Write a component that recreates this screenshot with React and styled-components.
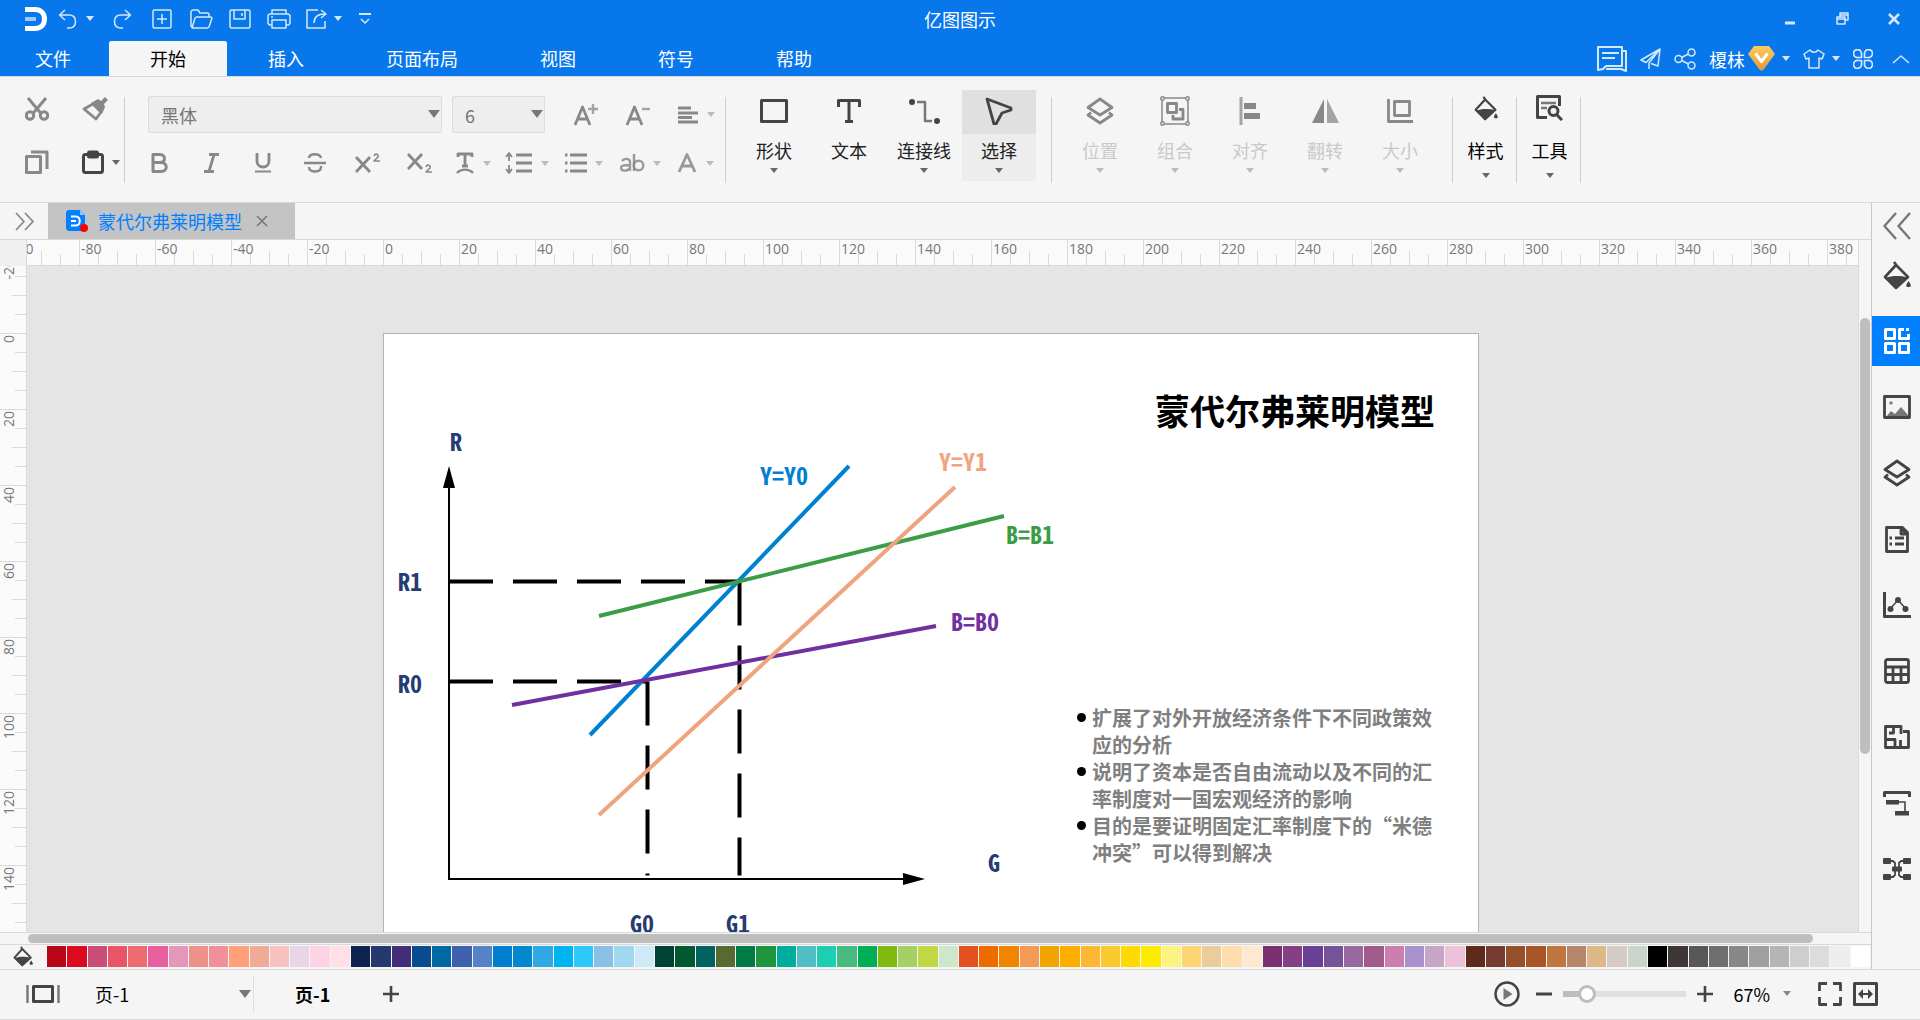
import { useState } from "react";
import styled, { createGlobalStyle, ThemeProvider } from "styled-components";

const theme = {
  colors: {
    brand: "#0877ec",
    active: "#0080ff",
    panel: "#f5f5f5",
    line: "#d9d9d9",
    tick: "#dadada",
    dark: "#444444",
    muted: "#888888",
    faded: "#c9c9c9",
    canvas: "#e5e5e5",
    thumb: "#bebebe",
    navy: "#263c73",
  },
  fonts: {
    ui: '"Noto Sans CJK SC", sans-serif',
    ruler: '"Open Sans", "Noto Sans", sans-serif',
    chart: '"Noto Sans Mono CJK SC", "Noto Sans CJK SC", sans-serif',
  },
};

/* ---------- icons ---------- */

const Svg = styled.svg`
  display: block;
  flex: none;
  fill: none;
  stroke: currentColor;
  stroke-width: ${({ $stroke }) => $stroke || 2};
  stroke-linejoin: round;
`;

function Icon({ w = 24, h = 24, stroke, children }) {
  return (
    <Svg width={w} height={h} viewBox={`0 0 ${w} ${h}`} $stroke={stroke} aria-hidden="true">
      {children}
    </Svg>
  );
}

const Caret = ({ large }) =>
  large ? (
    <Icon w={12} h={8}>
      <path d="M0 0h12l-6 8z" fill="currentColor" stroke="none" />
    </Icon>
  ) : (
    <Icon w={8} h={5}>
      <path d="M0 0h8L4 5z" fill="currentColor" stroke="none" />
    </Icon>
  );

const LogoIcon = () => (
  <Icon stroke={5}>
    <path d="M1 2.500h10c6 0 9.500 4 9.500 9.500s-3.500 9.500-9.500 9.500H1" />
    <path d="M1 12h11" stroke="#9cc9f7" strokeWidth="4" />
  </Icon>
);

const UndoIcon = () => (
  <Icon w={19} h={20} stroke={1.5}>
    <path d="M7 1 1.500 6 7 11M2 6h9c4 0 6.500 2.500 6.500 6.500S15 19 11 19H9" />
  </Icon>
);

const RedoIcon = () => (
  <Icon w={19} h={20} stroke={1.5}>
    <path d="m12 1 5.500 5-5.500 5M17 6H8c-4 0-6.500 2.500-6.500 6.500S4 19 8 19h2" />
  </Icon>
);

const NewIcon = () => (
  <Icon w={20} h={20} stroke={1.5}>
    <rect x="1" y="1" width="18" height="18" rx="1.500" />
    <path d="M10 5v10M5 10h10" />
  </Icon>
);

const OpenIcon = () => (
  <Icon w={24} h={20} stroke={1.5}>
    <path d="M2 18V2.500L3.500 1H9l2 3h8l1 1v3M3 19 6 9l1.500-1H22l1 1-3 9-1.500 1z" />
  </Icon>
);

const SaveIcon = () => (
  <Icon w={22} h={20} stroke={1.5}>
    <rect x="1" y="1" width="20" height="18" rx="1.500" />
    <path d="M5 1v9h11V1M13 4v3" />
  </Icon>
);

const PrintIcon = () => (
  <Icon w={24} h={20} stroke={1.5}>
    <path d="M5 5V1h14v4M5 16H2.500L1 14.500v-8L2.500 5h19L23 6.500v8L21.500 16H19" />
    <path d="M5 11h14v8H5zM4 8h2" />
  </Icon>
);

const ExportIcon = () => (
  <Icon w={21} h={20} stroke={1.5}>
    <path d="M12 1H1v18h18v-7" />
    <path d="M8 14c0-6 4-9 11-9m-4-4 5 4-5 4" />
  </Icon>
);

const CustomizeIcon = () => (
  <Icon w={12} h={12} stroke={2}>
    <path d="M0 1h12" />
    <path d="m2 6 4 4 4-4" strokeWidth="1.500" />
  </Icon>
);

const MinimizeIcon = () => (
  <Icon w={10} h={14} stroke={3}>
    <path d="M0 11h10" />
  </Icon>
);

const RestoreIcon = () => (
  <Icon w={13} h={13} stroke={1.5}>
    <path d="M4 5V1h8v7H9M4 3h8M1 5h8v7H1zM1 7h8" />
  </Icon>
);

const CloseIcon = () => (
  <Icon w={12} h={12} stroke={2.5}>
    <path d="m1 1 10 10M11 1 1 11" />
  </Icon>
);

const ChatIcon = () => (
  <Icon w={30} h={26} stroke={2}>
    <path d="M1 1h24v19H9l-3 3-5 1zM5 7h17M5 12h13" />
    <path d="M26 5h3v20l-5-2H9" />
  </Icon>
);

const SendIcon = () => (
  <Icon w={21} h={22} stroke={1.5}>
    <path d="M20 1 1 12l5 2.500L20 1l-2 17-7-2.500M20 1 9 15v6" />
  </Icon>
);

const ShareIcon = () => (
  <Icon w={22} h={22} stroke={1.5}>
    <circle cx="4.500" cy="11" r="3.500" />
    <circle cx="17.500" cy="4.500" r="3.500" />
    <circle cx="17.500" cy="17.500" r="3.500" />
    <path d="m7.500 9.500 7-3.500M7.500 12.500l7 3.500" />
  </Icon>
);

const VipIcon = () => (
  <Icon w={27} h={25}>
    <defs>
      <linearGradient id="vip" x1="0" y1="0" x2="0" y2="1">
        <stop offset="0" stopColor="#ffcb5c" />
        <stop offset="1" stopColor="#e09c3a" />
      </linearGradient>
    </defs>
    <path d="M6 0h15l6 8-11 15c-2 2-3 2-5 0L0 8z" fill="url(#vip)" stroke="none" />
    <path d="m7.500 7.500 6 8 6-8" stroke="#fff" strokeWidth="3" />
  </Icon>
);

const ShirtIcon = () => (
  <Icon w={22} h={20} stroke={1.5}>
    <path d="M7 1 1 5l2 5 3-1v10h10V9l3 1 2-5-6-4c-2 3-6 3-8 0z" />
  </Icon>
);

const CloverIcon = () => (
  <Icon w={20} h={20} stroke={1.7}>
    <path d="M8.500 8.500H5A4 4 0 1 1 8.500 5zM11.500 8.500V5a4 4 0 1 1 3.500 3.500zM8.500 11.500V15A4 4 0 1 1 5 11.500zM11.500 11.500H15a4 4 0 1 1-3.500 3.500z" />
  </Icon>
);

const ChevronUpIcon = () => (
  <Icon w={18} h={10} stroke={1.5}>
    <path d="m1 9 8-7 8 7" />
  </Icon>
);

const CutIcon = () => (
  <Icon stroke={3}>
    <path d="M3 1 16.500 17M21 1 7.500 17" />
    <circle cx="5" cy="18.500" r="3.700" />
    <circle cx="19" cy="18.500" r="3.700" />
  </Icon>
);

const BrushIcon = () => (
  <Icon w={26} stroke={2.8}>
    <path d="m2 12 9-5 8 8-5 7z" />
    <path d="m9 6 7-4 3 2 4-4 3 3-4 4 1 3-3 7z" fill="currentColor" stroke="none" />
  </Icon>
);

const CopyIcon = () => (
  <Icon stroke={3}>
    <path d="M1.500 6.500h14v16h-14z" />
    <path d="M6 2h16v17" />
  </Icon>
);

const PasteIcon = () => (
  <Icon w={22} stroke={3}>
    <rect x="1.500" y="4.500" width="19" height="18" rx="2" />
    <rect x="6.500" y="2" width="9" height="5" rx="1" />
  </Icon>
);

const FontUpIcon = () => (
  <Icon w={25} stroke={2.8}>
    <path d="M2 22 9.500 4 17 22M4.500 16h10" />
    <path d="M20 1v10M15 6h10" strokeWidth="2.400" opacity="0.75" />
  </Icon>
);

const FontDownIcon = () => (
  <Icon w={25} stroke={2.8}>
    <path d="M2 22 9.500 4 17 22M4.500 16h10" />
    <path d="M17 6h8" strokeWidth="2.400" opacity="0.75" />
  </Icon>
);

const AlignIcon = () => (
  <Icon w={22} h={18} stroke={2.8}>
    <path d="M1 2h13M1 7h20M1 11.500h14M1 16h20" />
  </Icon>
);

const BoldIcon = () => (
  <Icon w={17} h={20} stroke={3}>
    <path d="M2 1.500h7c6 0 6 8 0 8H2zM2 9.500h8c7 0 7 9 0 9H2z" />
  </Icon>
);

const ItalicIcon = () => (
  <Icon w={17} h={20} stroke={2.8}>
    <path d="M6 1.500h10M1 18.500h10M11 1.500 6 18.500" />
  </Icon>
);

const UnderlineIcon = () => (
  <Icon w={17} h={20} stroke={2.8}>
    <path d="M2 0v8c0 8 12 8 12 0V0" />
    <path d="M0 18.500h16" strokeWidth="2" />
  </Icon>
);

const StrikeIcon = () => (
  <Icon w={22} h={20} stroke={2.5}>
    <path d="M0 10h22M17 5c-1-5-12-5-12 0M5 14c0 6 12 6 12 0v-1" />
  </Icon>
);

const SuperIcon = () => (
  <Icon w={25} h={20} stroke={2.8}>
    <path d="m1 4 14 15M15 4 1 19" />
    <path d="M19 3c1-3 5-2 4 1l-4 4h6" strokeWidth="1.600" />
  </Icon>
);

const SubIcon = () => (
  <Icon w={25} h={20} stroke={2.8}>
    <path d="m1 1 14 15M15 1 1 16" />
    <path d="M19 14c1-3 5-2 4 1l-4 4h6" strokeWidth="1.600" />
  </Icon>
);

const TextArcIcon = () => (
  <Icon w={19} h={22} stroke={2.8}>
    <path d="M2 5V2h14v3M9 2v12M6 14h6" />
    <path d="M1 21c4-4.500 12-4.500 16 0" strokeWidth="2.400" />
  </Icon>
);

const LineHeightIcon = () => (
  <Icon w={28} h={22} stroke={2.8}>
    <path d="M11 3h16M11 11h16M11 19h16" />
    <path d="M4 2v7M1 5l3-4 3 4M4 13v7M1 17l3 4 3-4" strokeWidth="1.800" />
  </Icon>
);

const ListIcon = () => (
  <Icon w={22} h={20} stroke={2.8}>
    <path d="M5 2h17M5 10h17M5 18h17M0 2h2.500M0 10h2.500M0 18h2.500" />
  </Icon>
);

const AbIcon = () => (
  <Icon w={25} h={20} stroke={2.4}>
    <path d="M2 8c2-3 8-3 8 1v9M10 12c-5 0-9 0-9 3s6 4 9 0M14 1v17" opacity="0.85" />
    <circle cx="18.500" cy="12.500" r="4.800" opacity="0.85" />
  </Icon>
);

const FontColorIcon = () => (
  <Icon w={21} h={20} stroke={2.8}>
    <path d="M2 19 10 1.500 18 19M5 13h10" opacity="0.85" />
  </Icon>
);

const RectIcon = () => (
  <Icon w={28} h={26} stroke={3}>
    <path d="M1.500 2.500h25v21h-25z" />
  </Icon>
);

const TextIcon = () => (
  <Icon w={24} h={26} stroke={3}>
    <path d="M1.500 9V2.500h21V9M12 3v20M8 23.500h8" />
  </Icon>
);

const ConnectorIcon = () => (
  <Icon w={31} h={26} stroke={2.5}>
    <path d="M8 4h8v19h7" stroke="#777" />
    <circle cx="3" cy="4" r="3" fill="currentColor" stroke="none" />
    <circle cx="28" cy="23" r="3" fill="currentColor" stroke="none" />
  </Icon>
);

const PointerIcon = () => (
  <Icon w={28} h={28} stroke={2.8}>
    <path d="m2 2 24 9v2l-9 3-6 11H9z" />
  </Icon>
);

const LayersIcon = () => (
  <Icon w={28} h={28} stroke={2.8}>
    <path d="m14 2 12 8.500L14 18 2 10.500zM5 15.500 2 18l12 8 12-8-3-2.500" />
  </Icon>
);

const GroupIcon = () => (
  <Icon w={30} h={30} stroke={1.5}>
    <path d="M2 2h26v26H2z" />
    <g fill="#f5f5f5">
      <circle cx="2.500" cy="2.500" r="1.700" />
      <circle cx="27.500" cy="2.500" r="1.700" />
      <circle cx="2.500" cy="27.500" r="1.700" />
      <circle cx="27.500" cy="27.500" r="1.700" />
    </g>
    <path d="M7.500 7.500h9v9h-9zM19 13.500h4V23H13v-4" strokeWidth="2.800" />
  </Icon>
);

const AlignLeftIcon = () => (
  <Icon w={22} h={28}>
    <path d="M2 0v28" strokeWidth="3" opacity="0.75" />
    <path d="M5 6h12v6H5zM5 16h16v6H5z" fill="currentColor" stroke="none" />
  </Icon>
);

const FlipIcon = () => (
  <Icon w={27} h={24}>
    <path d="M12 0v24H0z" fill="currentColor" stroke="none" />
    <path d="M15 0v24h12z" fill="currentColor" stroke="none" opacity="0.75" />
  </Icon>
);

const SizeIcon = () => (
  <Icon w={26} h={24} stroke={2.8}>
    <path d="M1.500 0v22.500H26M7.500 2.500h15v14h-15z" />
  </Icon>
);

const BucketIcon = ({ w = 28, h = 29 }) => (
  <Svg width={w} height={h} viewBox="0 0 28 29" $stroke={2.6} aria-hidden="true">
    <path d="m11 1 3 4M13 4 2 16l11 11 12-11z" />
    <path d="M3 17c6-3 15-2 21-1L13 28z" fill="currentColor" stroke="none" />
    <path d="M25.500 20c3 4 3 6 0 6s-3-2 0-6z" fill="currentColor" stroke="none" />
  </Svg>
);

const ToolsIcon = () => (
  <Icon w={27} h={26} stroke={3}>
    <path d="M11 22.500H1.500v-21h22V11" />
    <path d="M5 8h15M5 13h6" stroke="#777" strokeWidth="2.500" />
    <circle cx="17.500" cy="16" r="4.500" />
    <path d="m21 20 5 5" />
  </Icon>
);

const DoubleRightIcon = () => (
  <Icon w={19} h={19} stroke={1.8}>
    <path d="m1 1 8 8.500L1 18M10 1l8 8.500-8 8.500" />
  </Icon>
);

const DoubleLeftIcon = () => (
  <Icon w={28} h={28} stroke={2.4}>
    <path d="M13 1 1.500 14 13 27M27 1 15.500 14 27 27" />
  </Icon>
);

const DocIcon = () => (
  <Icon w={22} h={24}>
    <path d="M2 1h12l5 5v15l-1 1H2l-2-2V3z" fill="#0080ff" stroke="none" />
    <path d="M14 1v5h5z" fill="#8ec6ff" stroke="none" />
    <path d="M5 7.500h5c5 0 5 9 0 9H5M5 12h5" stroke="#fff" strokeWidth="2" />
    <circle cx="18" cy="19" r="4" fill="#f00" stroke="none" />
  </Icon>
);

const SmallCloseIcon = () => (
  <Icon w={12} h={12} stroke={1.6}>
    <path d="m1 1 10 10M11 1 1 11" />
  </Icon>
);

const SymbolsIcon = () => (
  <Icon w={26} h={26} stroke={3}>
    <path d="M1.500 1.500h9v9h-9zM1.500 15.500h9v9h-9zM15.500 15.500h9v9h-9zM20 1.500h-4.500v9h9V6M23.500 0v3" />
  </Icon>
);

const ImageIcon = () => (
  <Icon w={28} h={24} stroke={2.8}>
    <path d="m3 22 5-6 4 3 6-7 7 8v2z" fill="#777" stroke="none" />
    <path d="M6.500 8h3" stroke="#777" />
    <path d="M1.500 1.500h25v21h-25z" />
  </Icon>
);

const OutlineDocIcon = () => (
  <Icon w={24} h={27} stroke={2.8}>
    <path d="M1.500 1.500h16l5 5v19h-21z" />
    <path d="M16 2v6h6zM4.500 12H7M10 12h9M4.500 18H7M10 18h9" />
  </Icon>
);

const ChartIcon = () => (
  <Icon w={28} h={26}>
    <path d="M1.500 0v24.500H28" strokeWidth="3" />
    <path d="m7 17 8-9 8 9" strokeWidth="1.500" />
    <g fill="currentColor" stroke="none">
      <circle cx="7.500" cy="17" r="3" />
      <circle cx="15" cy="8" r="3" />
      <circle cx="22.500" cy="17" r="3" />
    </g>
  </Icon>
);

const TableIcon = () => (
  <Icon w={26} h={26} stroke={2.8}>
    <rect x="1.500" y="1.500" width="23" height="23" rx="2" />
    <path d="M2 9h22M2 16.500h22M9 9v15M17 9v15" />
  </Icon>
);

const FloorPlanIcon = () => (
  <Icon w={26} h={26} stroke={2.8}>
    <path d="M17 10V2.500H1.500v21h23V7.500H19M9.500 2.500V9H5M1.500 15.500H11V23M16.500 16v7" />
  </Icon>
);

const RollerIcon = () => (
  <Icon w={28} h={26}>
    <path d="M1.500 7V2.500h25V7" strokeWidth="3" />
    <path d="M3 10h13v4.500H3zM12 21h14v4.500H12z" fill="currentColor" stroke="none" />
    <path d="M15 12h7v9" strokeWidth="1.600" />
  </Icon>
);

const MindMapIcon = () => (
  <Icon w={28} h={24}>
    <g fill="currentColor" stroke="none">
      <rect y="1" width="8" height="6" rx="1" />
      <rect x="20" y="1" width="8" height="6" rx="1" />
      <rect y="17" width="8" height="6" rx="1" />
      <rect x="20" y="17" width="8" height="6" rx="1" />
      <rect x="9" y="9.500" width="10" height="5" rx="1" />
    </g>
    <path d="M7 4h3l2 2v12l-2 2H7M21 4h-3l-2 2v12l2 2h3" strokeWidth="1.800" />
  </Icon>
);

const PagesIcon = () => (
  <Icon w={34} h={20}>
    <path d="M1.500 1v18M32.500 1v18" stroke="#777" strokeWidth="2.400" />
    <path d="M7.500 2.500h19v15h-19z" strokeWidth="3" />
  </Icon>
);

const PlusIcon = () => (
  <Icon w={16} h={16} stroke={2.6}>
    <path d="M8 0v16M0 8h16" />
  </Icon>
);

const MinusIcon = () => (
  <Icon w={16} h={16} stroke={3}>
    <path d="M0 8h16" />
  </Icon>
);

const PlayIcon = () => (
  <Icon w={26} h={26} stroke={2.4}>
    <circle cx="13" cy="13" r="11.500" />
    <path d="M9.500 7v12l9-6z" fill="#777" stroke="none" />
  </Icon>
);

const FullscreenIcon = () => (
  <Icon w={24} h={24} stroke={2.8}>
    <path d="M9 1.500H1.500V9M15 1.500h7.500V9M9 22.500H1.500V15M15 22.500h7.500V15" />
  </Icon>
);

const FitIcon = () => (
  <Icon w={25} h={24} stroke={3}>
    <path d="M1.500 1.500h22v21h-22z" />
    <path d="M8 12h9" strokeWidth="2" />
    <path d="m10 7-5 5 5 5zM15 7l5 5-5 5z" fill="currentColor" stroke="none" />
  </Icon>
);

/* ---------- data ---------- */

const menuTabs = ["文件", "开始", "插入", "页面布局", "视图", "符号", "帮助"];

const quickActions = [
  { label: "重做", icon: <RedoIcon /> },
  { label: "新建", icon: <NewIcon /> },
  { label: "打开", icon: <OpenIcon /> },
  { label: "保存", icon: <SaveIcon /> },
  { label: "打印", icon: <PrintIcon /> },
];

const formatTools = [
  { label: "加粗", icon: <BoldIcon />, width: 52 },
  { label: "斜体", icon: <ItalicIcon />, width: 52 },
  { label: "下划线", icon: <UnderlineIcon />, width: 52 },
  { label: "删除线", icon: <StrikeIcon />, width: 52 },
  { label: "上标", icon: <SuperIcon />, width: 52 },
  { label: "下标", icon: <SubIcon />, width: 52 },
  { label: "文字效果", icon: <TextArcIcon />, width: 56, caret: true },
  { label: "行距", icon: <LineHeightIcon />, width: 52, caret: true },
  { label: "项目符号", icon: <ListIcon />, width: 62, caret: true },
  { label: "大小写", icon: <AbIcon />, width: 50, caret: true },
  { label: "字体颜色", icon: <FontColorIcon />, width: 60, caret: true },
];

const insertTools = [
  { label: "形状", icon: <RectIcon />, caret: true },
  { label: "文本", icon: <TextIcon /> },
  { label: "连接线", icon: <ConnectorIcon />, caret: true },
  { label: "选择", icon: <PointerIcon />, caret: true, selected: true },
];

const arrangeTools = [
  { label: "位置", icon: <LayersIcon /> },
  { label: "组合", icon: <GroupIcon /> },
  { label: "对齐", icon: <AlignLeftIcon /> },
  { label: "翻转", icon: <FlipIcon /> },
  { label: "大小", icon: <SizeIcon /> },
];

const sideTools = [
  { label: "填充", icon: <BucketIcon /> },
  { label: "符号库", icon: <SymbolsIcon />, active: true },
  { label: "图片", icon: <ImageIcon /> },
  { label: "图层", icon: <LayersIcon /> },
  { label: "大纲", icon: <OutlineDocIcon /> },
  { label: "图表", icon: <ChartIcon /> },
  { label: "表格", icon: <TableIcon /> },
  { label: "平面图", icon: <FloorPlanIcon /> },
  { label: "主题", icon: <RollerIcon /> },
  { label: "思维导图", icon: <MindMapIcon /> },
];

const palette = (
  "b70718 db0a1e c94f77 e85565 ed6c70 e75f9e e497b8 ef9089 f19099 ffa079 f0ab96 f6c1be ead4e8 ffd2e4 fee0e6 " +
  "0f2350 243a6f 422d78 094b8f 0068a5 3f60ad 5584c6 007fd1 0089cf 2fa8e3 00b4f0 2fc8fb 8abfe8 a0d8ef ceeaf6 " +
  "004334 005931 00635f 576b30 007b46 1f963e 00ae9e 50bec3 1acfb4 47bb80 00af54 80b90f a5d064 bfd843 cee7ca " +
  "e35120 ee6b00 f28500 f59a52 f2a500 ffae00 feb733 fac92f ffda00 feec00 fdf383 fed574 ebcd9b ffdead fde9d1 " +
  "7b3072 843f85 684197 765398 9868a0 a05b8b cd7eb1 a991cd c7a5c9 ebc2da 5c2b1b 753c30 954f2a a95626 c0773f " +
  "b5866b dfb887 d4cbc5 cbd4cb 000000 3e3736 585656 6f6f6f 878787 9ea0a0 b4b6b6 cdcece dcdcdc ededed ffffff"
).split(" ");

const points = [
  "扩展了对外开放经济条件下不同政策效应的分析",
  "说明了资本是否自由流动以及不同的汇率制度对一国宏观经济的影响",
  "目的是要证明固定汇率制度下的“米德冲突”可以得到解决",
];

const range = (from, count) => Array.from({ length: count }, (_, i) => from + i * 20);

/* ---------- diagram ---------- */

function Diagram() {
  return (
    <ChartSvg width="700" height="640" viewBox="0 0 700 640" role="img" aria-label="蒙代尔弗莱明模型">
      <g stroke="#000" strokeWidth="2">
        <path d="M65 150v395h458" />
        <path d="m65 132 6 22H59zM541 545l-22-6v12z" fill="#000" stroke="none" />
      </g>
      <g stroke="#000" strokeWidth="4" strokeDasharray="44 20">
        <path d="M65 247.500h291M65 347.500h199M355.500 247.500v294M263.500 347.500v194" />
      </g>
      <g strokeWidth="4">
        <path d="M206 401 465 132" stroke="#0080d0" />
        <path d="m215 282 405-100" stroke="#3c9c47" />
        <path d="m128 371 424-79" stroke="#7030a0" />
        <path d="m215 481 356-328" stroke="#f0a47e" />
      </g>
      <g>
        <text x="66" y="117">R</text>
        <text x="14" y="257">R1</text>
        <text x="14" y="359">R0</text>
        <text x="604" y="538">G</text>
        <text x="246" y="599">G0</text>
        <text x="342" y="599">G1</text>
        <CurveLabel x="376" y="151" $color="#0080d0">Y=Y0</CurveLabel>
        <CurveLabel x="555" y="137" $color="#f0a47e">Y=Y1</CurveLabel>
        <CurveLabel x="622" y="210" $color="#3c9c47">B=B1</CurveLabel>
        <CurveLabel x="567" y="297" $color="#7030a0">B=B0</CurveLabel>
      </g>
    </ChartSvg>
  );
}

/* ---------- page ---------- */

export default function App() {
  const [zoom, setZoom] = useState(14);

  return (
    <ThemeProvider theme={theme}>
      <GlobalStyle />
      <Window>
        <Header>
          <TitleBar>
            <QuickAccess>
              <LogoIcon />
              <QuickButton $width={55} $gap={9} aria-label="撤销">
                <UndoIcon />
                <Caret />
              </QuickButton>
              {quickActions.map(({ label, icon }) => (
                <QuickButton key={label} $width={39} aria-label={label}>
                  {icon}
                </QuickButton>
              ))}
              <QuickButton $width={51} $gap={7} aria-label="导出">
                <ExportIcon />
                <Caret />
              </QuickButton>
              <QuickButton $width={32} aria-label="自定义">
                <CustomizeIcon />
              </QuickButton>
            </QuickAccess>
            <AppTitle>亿图图示</AppTitle>
            <WindowButtons>
              <QuickButton $width={52} aria-label="最小化">
                <MinimizeIcon />
              </QuickButton>
              <QuickButton $width={52} aria-label="还原">
                <RestoreIcon />
              </QuickButton>
              <QuickButton $width={52} aria-label="关闭">
                <CloseIcon />
              </QuickButton>
            </WindowButtons>
          </TitleBar>
          <MenuBar>
            <nav>
              {menuTabs.map((tab) => (
                <MenuTab key={tab} $active={tab === "开始"}>
                  {tab}
                </MenuTab>
              ))}
            </nav>
            <Account>
              <HeaderButton aria-label="消息">
                <ChatIcon />
              </HeaderButton>
              <HeaderButton aria-label="发送">
                <SendIcon />
              </HeaderButton>
              <HeaderButton aria-label="分享">
                <ShareIcon />
              </HeaderButton>
              <HeaderButton>
                <UserName>
                  榎枺
                  <VipIcon />
                </UserName>
                <Caret />
              </HeaderButton>
              <HeaderButton aria-label="皮肤">
                <ShirtIcon />
                <Caret />
              </HeaderButton>
              <HeaderButton aria-label="应用">
                <CloverIcon />
              </HeaderButton>
              <HeaderButton $width={30} aria-label="收起">
                <ChevronUpIcon />
              </HeaderButton>
            </Account>
          </MenuBar>
        </Header>

        <Ribbon>
          <ClipboardGroup>
            <ToolButton aria-label="剪切">
              <CutIcon />
            </ToolButton>
            <ToolButton aria-label="格式刷">
              <BrushIcon />
            </ToolButton>
            <ToolButton aria-label="复制">
              <CopyIcon />
            </ToolButton>
            <ToolButton $dark aria-label="粘贴">
              <PasteIcon />
              <Caret />
            </ToolButton>
          </ClipboardGroup>
          <Divider />
          <FontGroup>
            <FontRow>
              <SelectBox $width={294}>
                <select aria-label="字体" defaultValue="黑体">
                  <option>黑体</option>
                </select>
                <Caret large />
              </SelectBox>
              <SelectBox $width={93}>
                <select aria-label="字号" defaultValue="6">
                  <option>6</option>
                </select>
                <Caret large />
              </SelectBox>
              <SizeButtons>
                <ToolButton aria-label="增大字号">
                  <FontUpIcon />
                </ToolButton>
                <ToolButton aria-label="减小字号">
                  <FontDownIcon />
                </ToolButton>
                <ToolButton $fadedCaret aria-label="对齐方式">
                  <AlignIcon />
                  <Caret />
                </ToolButton>
              </SizeButtons>
            </FontRow>
            <FormatRow>
              {formatTools.map(({ label, icon, width, caret }) => (
                <ToolButton key={label} $width={width} $fadedCaret={caret} aria-label={label}>
                  {icon}
                  {caret && <Caret />}
                </ToolButton>
              ))}
            </FormatRow>
          </FontGroup>
          <Divider />
          <BigGroup>
            {insertTools.map(({ label, icon, caret, selected }) => (
              <BigButton key={label} $selected={selected}>
                <BigIcon $selected={selected}>{icon}</BigIcon>
                <BigLabel>{label}</BigLabel>
                {caret && <Caret />}
              </BigButton>
            ))}
          </BigGroup>
          <Divider />
          <BigGroup>
            {arrangeTools.map(({ label, icon }) => (
              <BigButton key={label} $faded>
                <BigIcon>{icon}</BigIcon>
                <BigLabel>{label}</BigLabel>
                <Caret />
              </BigButton>
            ))}
          </BigGroup>
          <Divider />
          <PanelButton>
            <BigIcon>
              <BucketIcon w={24} h={25} />
            </BigIcon>
            <BigLabel>样式</BigLabel>
            <Caret />
          </PanelButton>
          <Divider />
          <PanelButton>
            <BigIcon>
              <ToolsIcon />
            </BigIcon>
            <BigLabel>工具</BigLabel>
            <Caret />
          </PanelButton>
          <Divider />
        </Ribbon>

        <Body>
          <Editor>
            <DocumentTabs>
              <ExpandButton aria-label="展开">
                <DoubleRightIcon />
              </ExpandButton>
              <DocumentTab>
                <DocIcon />
                <span>蒙代尔弗莱明模型</span>
                <button aria-label="关闭标签">
                  <SmallCloseIcon />
                </button>
              </DocumentTab>
            </DocumentTabs>
            <Workspace>
              <RulerCorner />
              <TopRuler>
                {range(-100, 25).map((n) => (
                  <TopMark key={n}>{n}</TopMark>
                ))}
              </TopRuler>
              <ScrollTrackV>
                <div />
              </ScrollTrackV>
              <LeftRuler>
                {range(-20, 9).map((n) => (
                  <LeftMark key={n}>
                    <span>{n}</span>
                  </LeftMark>
                ))}
              </LeftRuler>
              <Canvas>
                <Paper>
                  <Diagram />
                  <Notes>
                    <h1>蒙代尔弗莱明模型</h1>
                    <ul>
                      {points.map((point) => (
                        <li key={point}>{point}</li>
                      ))}
                    </ul>
                  </Notes>
                </Paper>
              </Canvas>
            </Workspace>
            <ScrollTrackH>
              <div />
            </ScrollTrackH>
            <PaletteBar>
              <PaletteFill aria-label="填充颜色">
                <BucketIcon w={20} h={21} />
              </PaletteFill>
              {palette.map((color) => (
                <Swatch key={color} style={{ background: `#${color}` }} aria-label={`#${color}`} />
              ))}
            </PaletteBar>
          </Editor>
          <SideBar>
            <CollapseButton aria-label="收起面板">
              <DoubleLeftIcon />
            </CollapseButton>
            {sideTools.map(({ label, icon, active }) => (
              <SideButton key={label} $active={active} aria-label={label}>
                <span>{icon}</span>
              </SideButton>
            ))}
          </SideBar>
        </Body>

        <StatusBar>
          <StatusButton aria-label="页面视图">
            <PagesIcon />
          </StatusButton>
          <PageSelect>
            <select aria-label="页面" defaultValue="页-1">
              <option>页-1</option>
            </select>
            <Caret large />
          </PageSelect>
          <PageTab>页-1</PageTab>
          <StatusButton aria-label="新建页面">
            <PlusIcon />
          </StatusButton>
          <ZoomTools>
            <PlayButton aria-label="播放">
              <PlayIcon />
            </PlayButton>
            <StatusButton aria-label="缩小">
              <MinusIcon />
            </StatusButton>
            <ZoomSlider
              type="range"
              aria-label="缩放"
              value={zoom}
              onChange={(e) => setZoom(Number(e.target.value))}
            />
            <StatusButton aria-label="放大">
              <PlusIcon />
            </StatusButton>
            <ZoomLevel>
              67%
              <Caret />
            </ZoomLevel>
            <StatusButton aria-label="全屏">
              <FullscreenIcon />
            </StatusButton>
            <StatusButton aria-label="适应宽度">
              <FitIcon />
            </StatusButton>
          </ZoomTools>
        </StatusBar>
      </Window>
    </ThemeProvider>
  );
}

/* ---------- styles ---------- */

const GlobalStyle = createGlobalStyle`
  * {
    box-sizing: border-box;
  }

  body {
    margin: 0;
    font-family: ${({ theme }) => theme.fonts.ui};
    font-size: 18px;
    font-weight: 400;
    color: #000;
  }

  button,
  select {
    margin: 0;
    padding: 0;
    border: 0;
    background: none;
    color: inherit;
    font: inherit;
  }
`;

const Window = styled.div`
  display: flex;
  flex-direction: column;
  height: 100vh;
  background: ${({ theme }) => theme.colors.panel};
`;

const Header = styled.header`
  flex: none;
  background: ${({ theme }) => theme.colors.brand};
  color: #fff;
`;

const TitleBar = styled.div`
  display: grid;
  grid-template-columns: 1fr auto 1fr;
  align-items: center;
  height: 41px;
  padding: 0 0 4px;
`;

const QuickAccess = styled.div`
  display: flex;
  align-items: center;
  padding-left: 24px;
`;

const QuickButton = styled.button`
  display: flex;
  align-items: center;
  justify-content: center;
  gap: ${({ $gap }) => $gap || 0}px;
  width: ${({ $width }) => $width}px;
  height: 36px;
  color: #d6e8fb;
`;

const AppTitle = styled.div`
  line-height: 24px;
`;

const WindowButtons = styled.div`
  display: flex;
  justify-content: flex-end;
`;

const MenuBar = styled.div`
  display: flex;
  justify-content: space-between;
  height: 35px;

  nav {
    display: flex;
  }
`;

const MenuTab = styled.button`
  padding: 0 41px;
  line-height: 35px;
  border-radius: 2px 2px 0 0;
  background: ${({ $active, theme }) => ($active ? theme.colors.panel : "none")};
  color: ${({ $active }) => ($active ? "#000" : "#fff")};

  &:first-child {
    padding: 0 38px 0 35px;
  }
`;

const Account = styled.div`
  display: flex;
  align-items: center;
  gap: 13px;
  padding-right: 4px;
`;

const HeaderButton = styled.button`
  display: flex;
  align-items: center;
  justify-content: center;
  gap: 7px;
  width: ${({ $width }) => ($width ? `${$width}px` : "auto")};
  color: #d6e8fb;
`;

const UserName = styled.span`
  display: flex;
  align-items: center;
  gap: 3px;
  color: #fff;
  line-height: 24px;
`;

const Ribbon = styled.div`
  display: flex;
  flex: none;
  align-items: flex-start;
  height: 127px;
  padding-top: 13px;
  border-top: 1px solid ${({ theme }) => theme.colors.line};
  border-bottom: 1px solid ${({ theme }) => theme.colors.line};
`;

const Divider = styled.span`
  flex: none;
  width: 1px;
  height: 86px;
  margin-top: 7px;
  background: #cfcfcf;
`;

const ClipboardGroup = styled.div`
  display: grid;
  grid-template-columns: 57px 42px;
  grid-template-rows: 24px 24px;
  justify-items: start;
  row-gap: 29px;
  padding: 7px 0 0 25px;
`;

const ToolButton = styled.button`
  display: flex;
  flex: none;
  align-items: center;
  justify-content: center;
  gap: 8px;
  width: ${({ $width }) => ($width ? `${$width}px` : "auto")};
  height: 24px;
  color: ${({ $dark, theme }) => ($dark ? theme.colors.dark : theme.colors.muted)};

  svg:nth-child(2) {
    color: ${({ $fadedCaret }) => ($fadedCaret ? "#bbbbbb" : "#666666")};
  }
`;

const FontGroup = styled.div`
  width: 600px;
  padding-top: 6px;
`;

const FontRow = styled.div`
  display: flex;
  align-items: center;
  gap: 10px;
  height: 37px;
  padding-left: 23px;
`;

const SelectBox = styled.div`
  position: relative;
  width: ${({ $width }) => $width}px;
  height: 37px;
  color: #777;

  select {
    width: 100%;
    height: 100%;
    padding: 0 12px;
    appearance: none;
    border: 1px solid #dcdde0;
    border-radius: 2px;
    background: #eeeeee;
  }

  svg {
    position: absolute;
    top: 14px;
    right: 2px;
    pointer-events: none;
  }
`;

const SizeButtons = styled.div`
  display: flex;
  gap: 27px;
  padding-left: 18px;
`;

const FormatRow = styled.div`
  display: flex;
  padding: 18px 0 0 8px;
`;

const BigGroup = styled.div`
  display: flex;
  gap: 1px;
  padding: 0 15px 0 11px;
`;

const BigButton = styled.button`
  display: flex;
  flex-direction: column;
  align-items: center;
  width: 74px;
  height: 91px;
  border-radius: 2px;
  background: ${({ $selected }) => ($selected ? "#ededed" : "none")};
  color: ${({ $faded, theme }) => ($faded ? theme.colors.faded : "#222222")};

  & > svg {
    color: ${({ $faded }) => ($faded ? "#bbbbbb" : "#666666")};
  }

  & > span:first-child {
    color: ${({ $faded, theme }) => ($faded ? theme.colors.muted : theme.colors.dark)};
  }
`;

const BigIcon = styled.span`
  display: flex;
  align-items: center;
  justify-content: center;
  width: 100%;
  height: 44px;
  padding-bottom: 2px;
  background: ${({ $selected }) => ($selected ? "#e0e0e0" : "none")};
`;

const BigLabel = styled.span`
  height: 34px;
  line-height: 32px;
`;

const PanelButton = styled(BigButton)`
  width: 63px;
  padding-left: 2px;
  color: #000;

  & > span:first-child {
    height: 38px;
  }

  & > span:nth-child(2) {
    height: 45px;
    padding-top: 6px;
  }
`;

const Body = styled.div`
  display: flex;
  flex: 1;
  min-height: 0;
`;

const Editor = styled.main`
  display: flex;
  flex: 1;
  flex-direction: column;
  min-width: 0;
`;

const DocumentTabs = styled.div`
  display: flex;
  flex: none;
  height: 37px;
  border-bottom: 1px solid ${({ theme }) => theme.colors.line};
`;

const ExpandButton = styled.button`
  display: flex;
  align-items: center;
  justify-content: center;
  width: 48px;
  color: ${({ theme }) => theme.colors.muted};
`;

const DocumentTab = styled.div`
  display: flex;
  align-items: center;
  width: 247px;
  padding-left: 18px;
  background: #c4c4c4;
  color: ${({ theme }) => theme.colors.active};

  span {
    padding: 0 14px 0 10px;
    line-height: 24px;
  }

  button {
    color: #777;
  }
`;

const Workspace = styled.div`
  display: grid;
  flex: 1;
  grid-template-columns: 27px minmax(0, 1fr) 13px;
  grid-template-rows: 26px minmax(0, 1fr);
  min-height: 0;
`;

const RulerCorner = styled.div`
  border-right: 1px solid ${({ theme }) => theme.colors.tick};
  background: #f0f0f0;
`;

const TopRuler = styled.div`
  display: flex;
  overflow: hidden;
  border-bottom: 1px solid ${({ theme }) => theme.colors.tick};
  background: #fafafa;
  color: #777;
  font-family: ${({ theme }) => theme.fonts.ruler};
  font-size: 14px;
  line-height: 17px;
`;

/* one cell per 20 units: a full line, two short ticks and a taller one between */
const TopMark = styled.span`
  flex: 0 0 76px;
  padding-left: 2px;
  background:
    linear-gradient(#dadada, #dadada) 0 0 / 1px 100% no-repeat,
    linear-gradient(#dadada, #dadada) 19px 100% / 1px 11px no-repeat,
    linear-gradient(#dadada, #dadada) 38px 100% / 1px 14px no-repeat,
    linear-gradient(#dadada, #dadada) 57px 100% / 1px 11px no-repeat;

  &:first-child {
    margin-left: -24px;
  }
`;

const LeftRuler = styled.div`
  display: flex;
  flex-direction: column;
  overflow: hidden;
  border-right: 1px solid ${({ theme }) => theme.colors.tick};
  background: #fafafa;
  color: #777;
  font-family: ${({ theme }) => theme.fonts.ruler};
  font-size: 14px;
  line-height: 18px;
`;

const LeftMark = styled.div`
  flex: 0 0 76px;
  padding-top: 2px;
  background:
    linear-gradient(#dadada, #dadada) 0 0 / 100% 1px no-repeat,
    linear-gradient(#dadada, #dadada) 100% 19px / 11px 1px no-repeat,
    linear-gradient(#dadada, #dadada) 100% 38px / 14px 1px no-repeat,
    linear-gradient(#dadada, #dadada) 100% 57px / 11px 1px no-repeat;

  &:first-child {
    margin-top: -9px;
  }

  span {
    display: block;
    width: 18px;
    writing-mode: vertical-rl;
    transform: rotate(180deg);
    text-align: right;
  }
`;

const ScrollTrackV = styled.div`
  grid-row: 1 / 3;
  grid-column: 3;
  padding: 78px 1px 0;
  border-left: 1px solid ${({ theme }) => theme.colors.tick};

  div {
    height: 71%;
    border-radius: 5px;
    background: ${({ theme }) => theme.colors.thumb};
  }
`;

const ScrollTrackH = styled.div`
  flex: none;
  height: 13px;
  padding: 1px 58px 1px 28px;
  border-top: 1px solid ${({ theme }) => theme.colors.line};
  border-bottom: 1px solid ${({ theme }) => theme.colors.line};

  div {
    height: 9px;
    border-radius: 5px;
    background: ${({ theme }) => theme.colors.thumb};
  }
`;

const Canvas = styled.div`
  overflow: hidden;
  padding: 67px 0 0 356px;
  background: ${({ theme }) => theme.colors.canvas};
`;

const Paper = styled.section`
  display: flex;
  width: 1096px;
  border: 1px solid #b3b3b3;
  background: #fff;
`;

const ChartSvg = styled.svg`
  flex: none;
  fill: none;

  text {
    fill: ${({ theme }) => theme.colors.navy};
    font-family: ${({ theme }) => theme.fonts.chart};
    font-size: 24px;
    font-weight: 700;
  }
`;

const CurveLabel = styled.text`
  && {
    fill: ${({ $color }) => $color};
  }
`;

const Notes = styled.div`
  width: 352px;
  padding-top: 50px;

  h1 {
    margin: 0 0 0 71px;
    font-size: 35px;
    font-weight: 700;
    line-height: 52px;
    white-space: nowrap;
  }

  ul {
    margin: 268px 0 0;
    padding: 0 0 0 8px;
    list-style: none;
  }

  li {
    position: relative;
    width: 340px;
    color: #7f7f7f;
    font-size: 20px;
    font-weight: 700;
    line-height: 27px;
  }

  li::before {
    content: "";
    position: absolute;
    top: 9px;
    left: -15px;
    width: 9px;
    height: 9px;
    border-radius: 50%;
    background: #000;
  }
`;

const PaletteBar = styled.div`
  display: flex;
  flex: none;
  gap: 1px;
  height: 24px;
  padding: 1px 1px 2px 0;
`;

const PaletteFill = styled.button`
  display: flex;
  flex: none;
  align-items: center;
  justify-content: center;
  width: 46px;
  color: ${({ theme }) => theme.colors.dark};
`;

const Swatch = styled.button`
  flex: 1;
  height: 21px;
`;

const SideBar = styled.aside`
  display: flex;
  flex: none;
  flex-direction: column;
  width: 49px;
  border-left: 1px solid #c8c8c8;
`;

const CollapseButton = styled.button`
  display: flex;
  align-items: center;
  justify-content: center;
  height: 39px;
  padding-top: 7px;
  padding-left: 2px;
  color: #777;
`;

const SideButton = styled.button`
  display: flex;
  align-items: center;
  height: 66px;
  color: ${({ $active, theme }) => ($active ? "#fff" : theme.colors.dark)};

  span {
    display: flex;
    align-items: center;
    justify-content: center;
    width: 48px;
    height: 50px;
    padding-left: 2px;
    background: ${({ $active, theme }) => ($active ? theme.colors.active : "none")};
  }
`;

const StatusBar = styled.footer`
  display: flex;
  flex: none;
  align-items: center;
  height: 51px;
  padding: 0 0 2px 26px;
  border-top: 1px solid ${({ theme }) => theme.colors.line};
  border-bottom: 1px solid ${({ theme }) => theme.colors.line};
`;

const StatusButton = styled.button`
  color: ${({ theme }) => theme.colors.dark};
`;

const PageSelect = styled.div`
  position: relative;
  width: 194px;
  height: 36px;
  border-right: 1px solid #dedede;

  select {
    width: 100%;
    height: 100%;
    padding: 0 35px;
    appearance: none;
  }

  svg {
    position: absolute;
    top: 14px;
    right: 2px;
    color: #777;
    pointer-events: none;
  }
`;

const PageTab = styled.button`
  padding: 0 53px 0 41px;
  font-weight: 700;
`;

const ZoomTools = styled.div`
  display: flex;
  align-items: center;
  gap: 11px;
  margin-left: auto;
  padding-right: 42px;
`;

const PlayButton = styled(StatusButton)`
  padding-right: 5px;
`;

const ZoomSlider = styled.input`
  width: 123px;
  height: 18px;
  margin: 0;
  appearance: none;
  background: linear-gradient(
      to right,
      #bdbdbd ${({ value }) => value + 4}%,
      #e0e0e0 ${({ value }) => value + 4}%
    )
    center / 100% 6px no-repeat;

  &::-webkit-slider-thumb {
    width: 18px;
    height: 18px;
    appearance: none;
    border: 3px solid #bdbdbd;
    border-radius: 50%;
    background: #fff;
  }
`;

const ZoomLevel = styled.button`
  display: flex;
  align-items: center;
  gap: 13px;
  padding: 0 16px 0 9px;

  svg {
    color: #888;
  }
`;
